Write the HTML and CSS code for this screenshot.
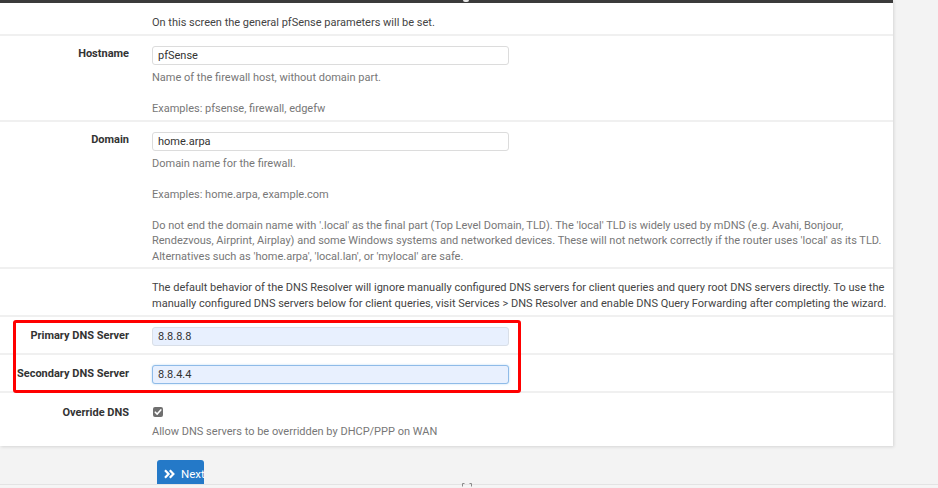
FILE: index.html
```html
<!DOCTYPE html>
<html>
<head>
<meta charset="utf-8">
<link rel="stylesheet" href="styles.css">
</head>
<body>
<div class="page">
  <div class="panel">
    <div class="panel-heading"><span class="heading-glyph"></span></div>
    <div class="row intro">
      <div class="label"></div>
      <div class="field"><p class="intro-text">On this screen the general pfSense parameters will be set.</p></div>
    </div>
    <div class="row">
      <div class="label lbl-host">Hostname</div>
      <div class="field fld-host">
        <input class="input" type="text" value="pfSense">
        <p class="help">Name of the firewall host, without domain part.<br><br>Examples: pfsense, firewall, edgefw</p>
      </div>
    </div>
    <div class="row">
      <div class="label lbl-host">Domain</div>
      <div class="field fld-host">
        <input class="input" type="text" value="home.arpa">
        <p class="help">Domain name for the firewall.<br><br>Examples: home.arpa, example.com<br><br>Do not end the domain name with '.local' as the final part (Top Level Domain, TLD). The 'local' TLD is widely used by mDNS (e.g. Avahi, Bonjour, Rendezvous, Airprint, Airplay) and some Windows systems and networked devices. These will not network correctly if the router uses 'local' as its TLD. Alternatives such as 'home.arpa', 'local.lan', or 'mylocal' are safe.</p>
      </div>
    </div>
    <div class="row resolver">
      <div class="label"></div>
      <div class="field"><p class="intro-text">The default behavior of the DNS Resolver will ignore manually configured DNS servers for client queries and query root DNS servers directly. To use the manually configured DNS servers below for client queries, visit Services &gt; DNS Resolver and enable DNS Query Forwarding after completing the wizard.</p></div>
    </div>
    <div class="dns-group">
      <div class="row dns">
        <div class="label lbl-dns">Primary DNS Server</div>
        <div class="field fld-dns"><input class="input autofill" type="text" value="8.8.8.8"></div>
      </div>
      <div class="row dns">
        <div class="label lbl-dns">Secondary DNS Server</div>
        <div class="field fld-dns"><input class="input autofill focused" type="text" value="8.8.4.4"></div>
      </div>
      <div class="highlight"></div>
    </div>
    <div class="row last">
      <div class="label lbl-override">Override DNS</div>
      <div class="field fld-override">
        <span class="checkbox"><svg width="10" height="10" viewBox="0 0 10 10"><path d="M2.3 5.2 L4.2 7.1 L7.8 2.9" fill="none" stroke="#fff" stroke-width="1.6" stroke-linecap="round" stroke-linejoin="round"/></svg></span>
        <p class="help">Allow DNS servers to be overridden by DHCP/PPP on WAN</p>
      </div>
    </div>
  </div>
  <div class="actions">
    <button class="btn"><svg class="btn-icon" width="11" height="10" viewBox="0 0 11 10"><path d="M1 1.2 L4.6 5 L1 8.8 M5.8 1.2 L9.4 5 L5.8 8.8" fill="none" stroke="#fff" stroke-width="2.2" stroke-linejoin="miter"/></svg>Next</button>
  </div>
  <div class="bottom-strip"><span class="corner-mark"><svg width="10" height="4" viewBox="0 0 10 4"><path d="M0.5 3.5 V0.5 H2.5 M7.5 0.5 H9.5 V3.5" fill="none" stroke="#8a8a8a" stroke-width="1"/></svg></span></div>
</div>
</body>
</html>
```

FILE: styles.css
```css
* { box-sizing: border-box; }
html, body { margin: 0; padding: 0; }
body {
  background: #f3f3f3;
  font-family: Roboto, "Liberation Sans", Arial, sans-serif;
  font-size: 11px;
  color: #444;
  overflow: hidden;
  width: 938px;
  height: 488px;
}
.page { width: 938px; }
.panel {
  width: 893px;
  background: #fff;
  box-shadow: 1px 1px 3px rgba(0,0,0,0.12);
}
.panel-heading {
  height: 3px;
  background: #3b3b3b;
  position: relative;
  overflow: hidden;
}
.heading-glyph {
  position: absolute;
  left: 463px;
  top: 0;
  width: 6px;
  height: 2px;
  background: #e8e8e8;
  border-radius: 0 0 2px 2px;
}
.row {
  display: grid;
  grid-template-columns: 152px 1fr;
  border-bottom: 2px solid #f0f0f0;
}
.row.last { border-bottom: none; }
.label {
  text-align: right;
  padding-right: 23px;
  font-weight: 700;
  color: #333;
  line-height: 16px;
  white-space: nowrap;
}
.field { padding-right: 6px; }
.intro-text {
  margin: 0;
  line-height: 15.5px;
  color: #444;
}
.intro .field { padding: 12px 0 3px; }
.intro .intro-text { line-height: 16px; }
.resolver .field { padding: 11px 6px 4px 0; }
.help {
  margin: 5px 0 0;
  line-height: 15.5px;
  color: #777;
}
.input {
  display: block;
  width: 357px;
  height: 19px;
  border: 1px solid #dcdcdc;
  border-radius: 3px;
  padding: 0 5px;
  font-family: inherit;
  font-size: 11px;
  color: #333;
  background: #fff;
  outline: none;
}
.input.autofill { background: #e8f0fe; border-color: #d9dfe8; }
.input.focused { border-color: #8fbbe8; box-shadow: 0 0 2px rgba(102,175,233,0.5); }
.lbl-host { padding-top: 10px; }
.fld-host { padding-top: 10px; padding-bottom: 3px; }
.lbl-dns { padding-top: 11px; }
.fld-dns { padding-top: 10px; padding-bottom: 7px; }
.lbl-override { padding-top: 12px; }
.fld-override { padding-top: 14px; padding-bottom: 6px; }
.fld-override .help { margin-top: 7px; }
.checkbox {
  display: block;
  width: 10px;
  height: 10px;
  margin-left: 1px;
  background: #6f6f6f;
  border-radius: 2px;
}
.checkbox svg { display: block; }
.dns-group { position: relative; }
.highlight {
  position: absolute;
  left: 13px;
  top: 3px;
  width: 508px;
  height: 73px;
  border: 3px solid #ff0000;
  border-radius: 3px;
  pointer-events: none;
}
.actions {
  height: 38px;
  overflow: hidden;
  padding: 14px 0 0 157px;
}
.btn {
  display: flex;
  align-items: center;
  gap: 6px;
  width: 47px;
  height: 30px;
  padding: 0 0 2px 7px;
  border: none;
  border-radius: 3px;
  background: #2479c8;
  color: #fff;
  font-family: inherit;
  font-size: 11.5px;
}
.btn-icon { display: block; flex: none; }
.bottom-strip {
  height: 3px;
  border-top: 1px solid #e3e3e3;
  background: #f5f5f5;
  position: relative;
}
.corner-mark {
  position: absolute;
  left: 462px;
  top: -2px;
}
.corner-mark svg { display: block; }
```
